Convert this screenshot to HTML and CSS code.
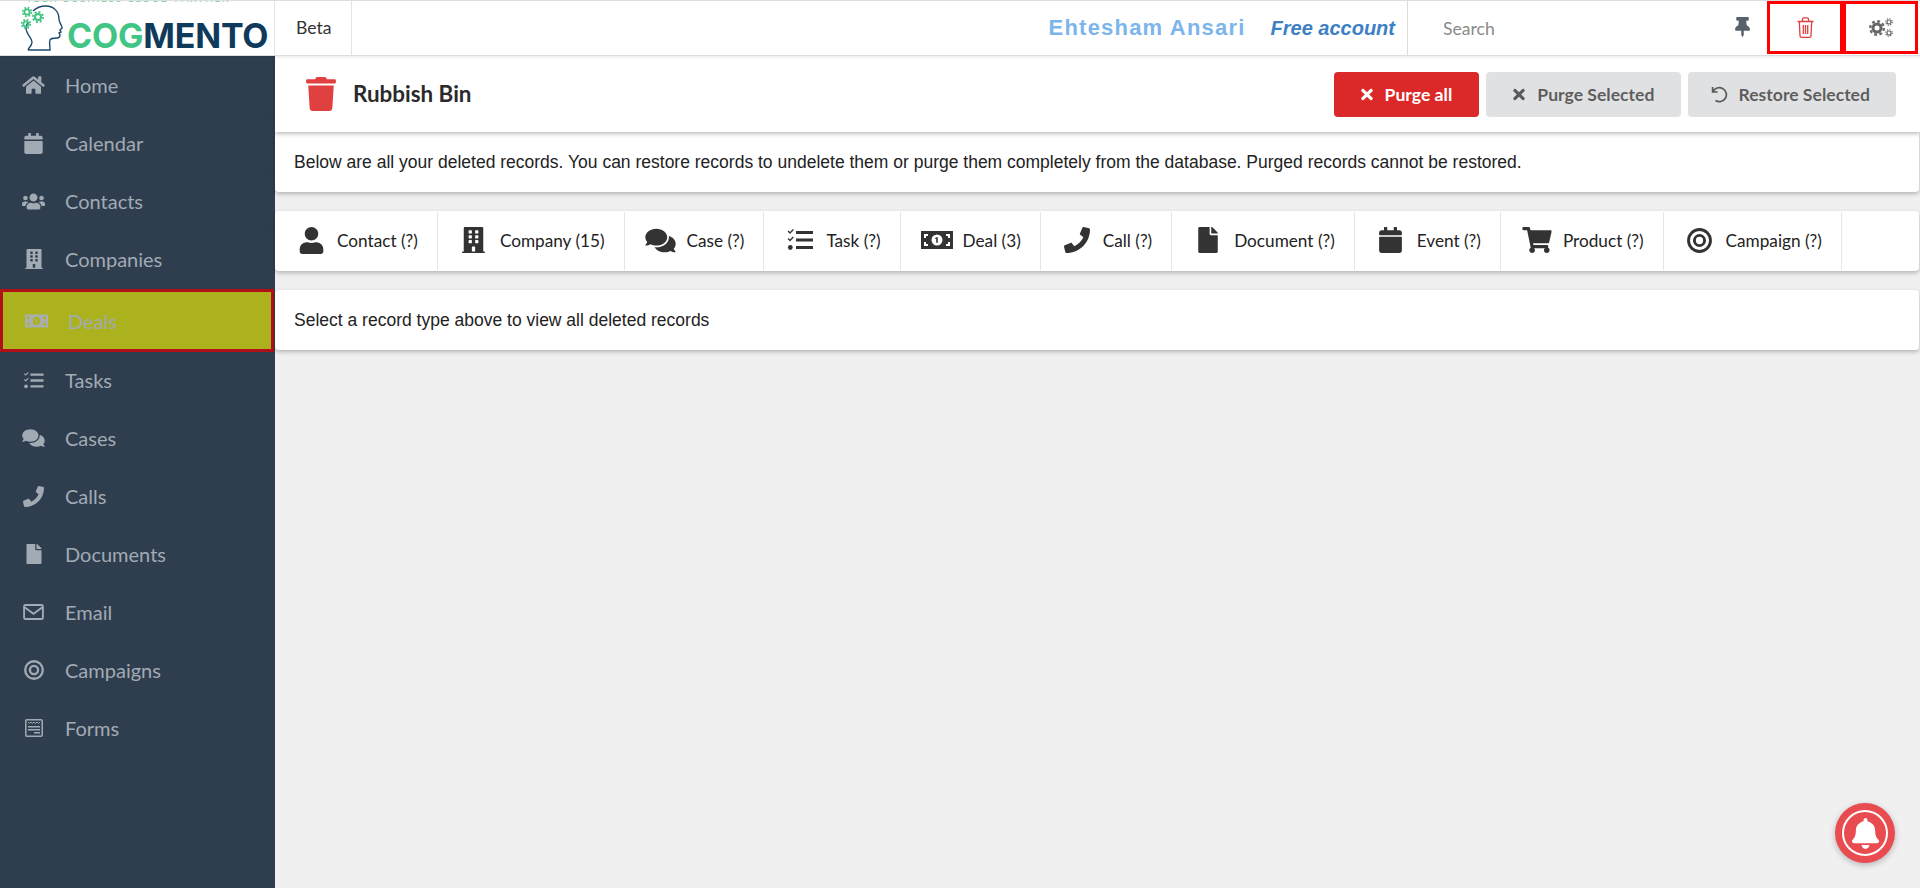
FILE: index.html
```html
<!DOCTYPE html>
<html lang="en">
<head>
    <meta charset="UTF-8">
    <title>Cogmento - Rubbish Bin</title>
    <link rel="stylesheet" href="styles.css">
</head>
<body>
    <svg class="sprite" width="0" height="0">
        <symbol id="i-home" viewBox="0 0 576 512"><path d="M280.37 148.26L96 300.11V464a16 16 0 0 0 16 16l112.06-.29a16 16 0 0 0 15.92-16V368a16 16 0 0 1 16-16h64a16 16 0 0 1 16 16v95.64a16 16 0 0 0 16 16.05L464 480a16 16 0 0 0 16-16V300L295.67 148.26a12.19 12.19 0 0 0-15.3 0zM571.6 251.47L488 182.56V44.05a12 12 0 0 0-12-12h-56a12 12 0 0 0-12 12v72.61L318.47 43a48 48 0 0 0-61 0L4.34 251.47a12 12 0 0 0-1.6 16.9l25.5 31A12 12 0 0 0 45.15 301l235.22-193.74a12.19 12.19 0 0 1 15.3 0L530.9 301a12 12 0 0 0 16.9-1.6l25.5-31a12 12 0 0 0-1.7-16.93z"/></symbol>
        <symbol id="i-calendar" viewBox="0 0 448 512"><path d="M12 192h424c6.6 0 12 5.4 12 12v260c0 26.5-21.5 48-48 48H48c-26.5 0-48-21.5-48-48V204c0-6.6 5.4-12 12-12zm436-44v-36c0-26.5-21.5-48-48-48h-48V12c0-6.6-5.4-12-12-12h-40c-6.6 0-12 5.4-12 12v52H160V12c0-6.6-5.4-12-12-12h-40c-6.6 0-12 5.4-12 12v52H48C21.5 64 0 85.5 0 112v36c0 6.6 5.4 12 12 12h424c6.6 0 12-5.4 12-12z"/></symbol>
        <symbol id="i-users" viewBox="0 0 640 512"><path d="M96 224c35.3 0 64-28.7 64-64s-28.7-64-64-64-64 28.7-64 64 28.7 64 64 64zm448 0c35.3 0 64-28.7 64-64s-28.7-64-64-64-64 28.7-64 64 28.7 64 64 64zm32 32h-64c-17.6 0-33.5 7.1-45.1 18.6 40.3 22.1 68.9 62 75.1 109.4h66c17.7 0 32-14.3 32-32v-32c0-35.3-28.7-64-64-64zm-256 0c61.9 0 112-50.1 112-112S381.9 32 320 32 208 82.1 208 144s50.1 112 112 112zm76.8 32h-8.3c-20.8 10-43.9 16-68.5 16s-47.6-6-68.5-16h-8.3C179.6 288 128 339.6 128 403.2V432c0 26.5 21.5 48 48 48h288c26.5 0 48-21.5 48-48v-28.8c0-63.6-51.6-115.2-115.2-115.2zm-223.7-13.4C161.5 263.1 145.6 256 128 256H64c-35.3 0-64 28.7-64 64v32c0 17.7 14.3 32 32 32h65.9c6.3-47.4 34.9-87.3 75.2-109.4z"/></symbol>
        <symbol id="i-user" viewBox="0 0 448 512"><path d="M224 256c70.7 0 128-57.3 128-128S294.7 0 224 0 96 57.3 96 128s57.3 128 128 128zm89.6 32h-16.7c-22.2 10.2-46.9 16-72.9 16s-50.6-5.8-72.9-16h-16.7C60.2 288 0 348.2 0 422.4V464c0 26.5 21.5 48 48 48h352c26.5 0 48-21.5 48-48v-41.6c0-74.2-60.2-134.4-134.4-134.4z"/></symbol>
        <symbol id="i-building" viewBox="0 0 448 512"><path d="M436 480h-20V24c0-13.255-10.745-24-24-24H56C42.745 0 32 10.745 32 24v456H12c-6.627 0-12 5.373-12 12v20h448v-20c0-6.627-5.373-12-12-12zM128 76c0-6.627 5.373-12 12-12h40c6.627 0 12 5.373 12 12v40c0 6.627-5.373 12-12 12h-40c-6.627 0-12-5.373-12-12V76zm0 96c0-6.627 5.373-12 12-12h40c6.627 0 12 5.373 12 12v40c0 6.627-5.373 12-12 12h-40c-6.627 0-12-5.373-12-12v-40zm52 148h-40c-6.627 0-12-5.373-12-12v-40c0-6.627 5.373-12 12-12h40c6.627 0 12 5.373 12 12v40c0 6.627-5.373 12-12 12zm76 160h-64v-84c0-6.627 5.373-12 12-12h40c6.627 0 12 5.373 12 12v84zm64-172c0 6.627-5.373 12-12 12h-40c-6.627 0-12-5.373-12-12v-40c0-6.627 5.373-12 12-12h40c6.627 0 12 5.373 12 12v40zm0-96c0 6.627-5.373 12-12 12h-40c-6.627 0-12-5.373-12-12v-40c0-6.627 5.373-12 12-12h40c6.627 0 12 5.373 12 12v40zm0-96c0 6.627-5.373 12-12 12h-40c-6.627 0-12-5.373-12-12V76c0-6.627 5.373-12 12-12h40c6.627 0 12 5.373 12 12v40z"/></symbol>
        <symbol id="i-money" viewBox="0 0 32 18"><path fill-rule="evenodd" d="M0 0h32v18H0zM16 3.500a5.500 5.500 0 1 0 0 11 5.500 5.500 0 0 0 0-11zM3 3v4h2V5h2V3zm22 0v2h2v2h2V3zM3 11v4h4v-2H5v-2zm24 0v2h-2v2h4v-4z"/><path d="M15.200 6.200h1.600v5.600h-1.600zM14 7.300l1.400-1.100v1.300l-1.400.6z"/></symbol>
        <symbol id="i-tasks" viewBox="0 0 26 22"><path d="M9 2h17v3H9zM9 9.500h17v3H9zM9 17h17v3H9z"/><path d="M.6 2.500l1-1 1.400 1.400L5.800 0l1 1L3 5zM.6 10l1-1 1.400 1.400L5.800 7.500l1 1L3 12.500z"/><circle cx="3.300" cy="18.500" r="2.400"/></symbol>
        <symbol id="i-comments" viewBox="0 0 576 512"><path d="M416 192c0-88.4-93.1-160-208-160S0 103.600 0 192c0 34.300 14.100 65.900 38 92-13.400 30.200-35.500 54.200-35.800 54.500-2.200 2.300-2.800 5.700-1.500 8.700S4.800 352 8 352c36.600 0 66.900-12.300 88.700-25 32.200 15.700 70.300 25 111.300 25 114.900 0 208-71.600 208-160zm122 220c23.900-26 38-57.700 38-92 0-66.900-53.500-124.200-129.300-148.100.9 6.600 1.300 13.300 1.300 20.100 0 105.900-107.700 192-240 192-10.800 0-21.300-.8-31.700-1.900C207.800 439.600 281.800 480 368 480c41 0 79.100-9.200 111.300-25 21.800 12.700 52.100 25 88.700 25 3.200 0 6.100-1.900 7.300-4.800 1.300-2.900.7-6.300-1.500-8.700-.3-.3-22.400-24.200-35.800-54.500z"/></symbol>
        <symbol id="i-phone" viewBox="0 0 512 512"><path d="M493.400 24.600l-104-24c-11.300-2.600-22.900 3.300-27.500 13.900l-48 112c-4.200 9.800-1.400 21.300 6.900 28l60.600 49.600c-36 76.700-98.900 140.500-177.200 177.200l-49.600-60.600c-6.800-8.300-18.200-11.100-28-6.900l-112 48C3.900 366.500-2 378.100.6 389.400l24 104C27.100 504.200 36.700 512 48 512c256.100 0 464-207.500 464-464 0-11.200-7.700-20.900-18.600-23.400z"/></symbol>
        <symbol id="i-file" viewBox="0 0 384 512"><path d="M224 136V0H24C10.700 0 0 10.700 0 24v464c0 13.300 10.700 24 24 24h336c13.300 0 24-10.700 24-24V160H248c-13.200 0-24-10.800-24-24zm160-14.100v6.100H256V0h6.100c6.400 0 12.500 2.500 17 7l97.900 98c4.500 4.500 7 10.600 7 16.900z"/></symbol>
        <symbol id="i-cart" viewBox="0 0 576 512"><path d="M528.120 301.319l47.273-208C578.806 78.301 567.391 64 551.990 64H159.208l-9.166-44.810C147.758 8.021 137.930 0 126.529 0H24C10.745 0 0 10.745 0 24v16c0 13.255 10.745 24 24 24h69.883l70.248 343.435C147.325 417.100 136 435.222 136 456c0 30.928 25.072 56 56 56s56-25.072 56-56c0-15.674-6.447-29.835-16.824-40h209.647C430.447 426.165 424 440.326 424 456c0 30.928 25.072 56 56 56s56-25.072 56-56c0-22.172-12.888-41.332-31.579-50.405l5.517-24.276c3.413-15.018-8.002-29.319-23.403-29.319H218.117l-6.545-32h293.145c11.206 0 20.920-7.754 23.403-18.681z"/></symbol>
        <symbol id="i-target" viewBox="0 0 26 26"><circle cx="13" cy="13" r="11.400" fill="none" stroke="currentColor" stroke-width="3"/><circle cx="13" cy="13" r="5.300" fill="none" stroke="currentColor" stroke-width="3"/></symbol>
        <symbol id="i-mail" viewBox="0 0 22 17"><rect x="1" y="1" width="20" height="15" rx="1.500" fill="none" stroke="currentColor" stroke-width="2"/><path d="M1.500 3.500L11 10.500l9.500-7" fill="none" stroke="currentColor" stroke-width="2"/></symbol>
        <symbol id="i-form" viewBox="0 0 18 18"><rect x=".8" y=".8" width="16.400" height="16.400" rx="1" fill="none" stroke="currentColor" stroke-width="1.500"/><path d="M3 3l1.500 1.500L6 3l1.500 1.500L9 3l1.500 1.500L12 3l1.500 1.500L15 3" fill="none" stroke="currentColor"/><path d="M3 7h12v1.500H3zM3 10h12v1.500H3zM9 13h6v1.500H9z"/></symbol>
        <symbol id="i-trash" viewBox="0 0 448 512"><path d="M432 32H312l-9.400-18.700A24 24 0 0 0 281.100 0H166.800a23.720 23.720 0 0 0-21.400 13.300L136 32H16A16 16 0 0 0 0 48v32a16 16 0 0 0 16 16h416a16 16 0 0 0 16-16V48a16 16 0 0 0-16-16zM53.200 467a48 48 0 0 0 47.900 45h245.800a48 48 0 0 0 47.900-45L416 128H32z"/></symbol>
        <symbol id="i-times" viewBox="0 0 352 512"><path d="M242.720 256l100.070-100.070c12.280-12.280 12.280-32.190 0-44.480l-22.240-22.240c-12.280-12.280-32.190-12.280-44.480 0L176 189.280 75.930 89.210c-12.280-12.280-32.190-12.280-44.480 0L9.210 111.450c-12.280 12.280-12.280 32.190 0 44.480L109.280 256 9.210 356.070c-12.280 12.280-12.280 32.190 0 44.480l22.240 22.240c12.280 12.280 32.200 12.280 44.480 0L176 322.720l100.070 100.070c12.280 12.280 32.200 12.280 44.480 0l22.240-22.240c12.280-12.280 12.280-32.190 0-44.480L242.720 256z"/></symbol>
        <symbol id="i-pin" viewBox="0 0 384 512"><path d="M298.028 214.267L285.793 96H328c13.255 0 24-10.745 24-24V24c0-13.255-10.745-24-24-24H56C42.745 0 32 10.745 32 24v48c0 13.255 10.745 24 24 24h42.207L85.972 214.267C37.465 236.820 0 277.261 0 328c0 13.255 10.745 24 24 24h136v104.007c0 1.242.289 2.467.845 3.578l24 48c2.941 5.882 11.364 5.893 14.310 0l24-48a8.006 8.006 0 0 0 .845-3.578V352h136c13.255 0 24-10.745 24-24-.001-51.183-37.983-91.420-85.972-113.733z"/></symbol>
        <symbol id="i-bell" viewBox="0 0 448 512"><path d="M224 512c35.320 0 63.970-28.650 63.970-64H160.030c0 35.350 28.650 64 63.970 64zm215.390-149.710c-19.320-20.760-55.470-51.990-55.470-154.290 0-77.700-54.480-139.900-127.940-155.160V32c0-17.670-14.320-32-31.980-32s-31.980 14.330-31.980 32v20.840C118.560 68.100 64.080 130.300 64.080 208c0 102.300-36.150 133.530-55.470 154.290-6 6.450-8.660 14.160-8.610 21.710.11 16.400 12.980 32 32.100 32h383.800c19.120 0 32-15.600 32.100-32 .05-7.550-2.610-15.270-8.610-21.710z"/></symbol>
    </svg>

    <header class="topbar">
        <a class="logo">
            <span class="logo-tag">TECH BUSINESS CLOUD PARTNER</span>
            <svg class="logo-head" width="44" height="46" viewBox="0 0 44 46">
                <path class="line" d="M8 45c1-3 4-4 4-8 0-4-6-8-6-14 0-2 1-4 2-6M13 6c3-3 8-5 13-5 8 0 13 6 13 13 0 2 1 4 3 8 1 2-2 2-2 3l1 2-2 1 1 2c0 2-1 3-3 3-3 0-6 0-7 2-1 2 0 5 0 10H8" stroke="#1e4a6e" stroke-width="1.400"/>
                <g class="line" stroke="#41c584">
                    <circle cx="7" cy="7" r="2.600" stroke-width="1.800"/>
                    <circle cx="7" cy="7" r="4.300" stroke-width="1.800" stroke-dasharray="1.700 1.700"/>
                    <circle cx="18" cy="12" r="3" stroke-width="2"/>
                    <circle cx="18" cy="12" r="5" stroke-width="2" stroke-dasharray="2 1.900"/>
                    <circle cx="6" cy="19" r="2.600" stroke-width="1.800"/>
                    <circle cx="6" cy="19" r="4.300" stroke-width="1.800" stroke-dasharray="1.700 1.700"/>
                </g>
            </svg>
            <span class="logo-text"><span class="logo-cog">COG</span>MENTO</span>
        </a>
        <div class="beta">Beta</div>
        <div class="account">
            <span class="account-name">Ehtesham Ansari</span>
            <span class="account-plan">Free account</span>
        </div>
        <div class="search">
            <span class="search-label">Search</span>
            <svg class="pin" width="15" height="20"><use href="#i-pin"/></svg>
        </div>
        <a class="top-btn top-trash">
            <svg width="17" height="21" viewBox="0 0 17 21">
                <path class="line" stroke="currentColor" stroke-width="1.300" d="M.5 4.500h16M5.500 4.500V2.200c0-.8.500-1.400 1.300-1.400h3.400c.8 0 1.300.6 1.300 1.400v2.300M2.300 4.500l.7 14.200c0 .9.700 1.600 1.600 1.600h7.800c.9 0 1.600-.7 1.600-1.600l.7-14.200M6.300 8v9M8.500 8v9M10.700 8v9"/>
            </svg>
        </a>
        <a class="top-btn top-cogs">
            <svg width="24" height="19" viewBox="0 0 24 19">
                <g class="line" stroke="currentColor">
                    <circle cx="8" cy="10" r="4" stroke-width="3"/>
                    <circle cx="8" cy="10" r="6.800" stroke-width="2.400" stroke-dasharray="2.800 2.540"/>
                    <circle cx="20" cy="4" r="2" stroke-width="1.200"/>
                    <circle cx="20" cy="4" r="3.300" stroke-width="1.100" stroke-dasharray="1.300 1.290"/>
                    <circle cx="20" cy="15" r="2" stroke-width="1.200"/>
                    <circle cx="20" cy="15" r="3.300" stroke-width="1.100" stroke-dasharray="1.300 1.290"/>
                </g>
            </svg>
        </a>
    </header>

    <div class="layout">
        <nav class="sidebar">
            <a class="nav-item"><span class="nav-ico"><svg width="23" height="20"><use href="#i-home"/></svg></span>Home</a>
            <a class="nav-item"><span class="nav-ico"><svg width="19" height="21"><use href="#i-calendar"/></svg></span>Calendar</a>
            <a class="nav-item"><span class="nav-ico"><svg width="26" height="21"><use href="#i-users"/></svg></span>Contacts</a>
            <a class="nav-item"><span class="nav-ico"><svg width="18" height="20"><use href="#i-building"/></svg></span>Companies</a>
            <a class="nav-item nav-active"><span class="nav-ico"><svg width="26" height="14"><use href="#i-money"/></svg></span>Deals</a>
            <a class="nav-item"><span class="nav-ico"><svg width="21" height="17"><use href="#i-tasks"/></svg></span>Tasks</a>
            <a class="nav-item"><span class="nav-ico"><svg width="23" height="20"><use href="#i-comments"/></svg></span>Cases</a>
            <a class="nav-item"><span class="nav-ico"><svg width="21" height="21"><use href="#i-phone"/></svg></span>Calls</a>
            <a class="nav-item"><span class="nav-ico"><svg width="16" height="20"><use href="#i-file"/></svg></span>Documents</a>
            <a class="nav-item"><span class="nav-ico"><svg width="21" height="16"><use href="#i-mail"/></svg></span>Email</a>
            <a class="nav-item"><span class="nav-ico"><svg width="20" height="20"><use href="#i-target"/></svg></span>Campaigns</a>
            <a class="nav-item"><span class="nav-ico"><svg width="18" height="18"><use href="#i-form"/></svg></span>Forms</a>
        </nav>

        <main class="content">
            <div class="page-head">
                <svg class="page-ico" width="30" height="34"><use href="#i-trash"/></svg>
                <h1 class="page-title">Rubbish Bin</h1>
                <div class="actions">
                    <button class="btn btn-red"><svg width="12" height="17"><use href="#i-times"/></svg>Purge all</button>
                    <button class="btn"><svg width="12" height="17"><use href="#i-times"/></svg>Purge Selected</button>
                    <button class="btn btn-restore">
                        <svg width="17" height="17" viewBox="0 0 17 17"><path class="line" stroke="currentColor" stroke-width="1.700" d="M1.600 1v5h5M2 5.800A7 7 0 1 1 4.500 14.500"/></svg>
                        Restore Selected
                    </button>
                </div>
            </div>

            <div class="card card-info">Below are all your deleted records. You can restore records to undelete them or purge them completely from the database. Purged records cannot be restored.</div>

            <div class="card tabs">
                <a class="tab"><span class="tab-ico"><svg width="27" height="27"><use href="#i-user"/></svg></span>Contact (?)</a>
                <a class="tab"><span class="tab-ico"><svg width="23" height="26"><use href="#i-building"/></svg></span>Company (15)</a>
                <a class="tab"><span class="tab-ico"><svg width="31" height="27"><use href="#i-comments"/></svg></span>Case (?)</a>
                <a class="tab"><span class="tab-ico"><svg width="26" height="22"><use href="#i-tasks"/></svg></span>Task (?)</a>
                <a class="tab"><span class="tab-ico"><svg width="32" height="18"><use href="#i-money"/></svg></span>Deal (3)</a>
                <a class="tab"><span class="tab-ico"><svg width="26" height="26"><use href="#i-phone"/></svg></span>Call (?)</a>
                <a class="tab"><span class="tab-ico"><svg width="20" height="26"><use href="#i-file"/></svg></span>Document (?)</a>
                <a class="tab"><span class="tab-ico"><svg width="23" height="26"><use href="#i-calendar"/></svg></span>Event (?)</a>
                <a class="tab"><span class="tab-ico"><svg width="30" height="26"><use href="#i-cart"/></svg></span>Product (?)</a>
                <a class="tab"><span class="tab-ico"><svg width="25" height="25"><use href="#i-target"/></svg></span>Campaign (?)</a>
            </div>

            <div class="card card-hint">Select a record type above to view all deleted records</div>
        </main>
    </div>

    <a class="bell"><span class="bell-ring"><svg width="27" height="31"><use href="#i-bell"/></svg></span></a>
</body>
</html>
```

FILE: styles.css
```css
* {
    box-sizing: border-box;
}

html, body {
    height: 100%;
}

body {
    margin: 0;
    font-family: 'Lato', sans-serif;
    background-color: #f0f0f0;
    color: #222;
    overflow: hidden;
}

svg {
    fill: currentColor;
    display: block;
}

svg .line {
    fill: none;
}

.sprite {
    position: absolute;
}

/* top bar */
.topbar {
    height: 56px;
    display: flex;
    background: white;
    border-top: 1px solid #ddd;
    border-bottom: 1px solid #ddd;
    box-shadow: 0 1px 3px rgba(0,0,0,0.1);
    position: relative;
    z-index: 3;
    overflow: hidden;
}

.logo {
    width: 275px;
    flex: none;
    display: flex;
    align-items: flex-start;
    border-right: 1px solid #e4e4e4;
    position: relative;
    padding: 4px 0 0 20px;
}

.logo-tag {
    position: absolute;
    top: -9px;
    left: 26px;
    font-size: 10px;
    letter-spacing: 1.7px;
    white-space: nowrap;
    color: #6fd19e;
}

.logo-head {
    flex: none;
}

.logo-text {
    font-family: 'Inter', sans-serif;
    font-weight: 700;
    font-size: 34px;
    line-height: 40px;
    margin: 11px 0 0 3px;
    letter-spacing: -0.2px;
    color: #0f3a5c;
}

.logo-cog {
    color: #41c584;
}

.beta {
    width: 77px;
    flex: none;
    padding-left: 21px;
    line-height: 54px;
    font-size: 17.6px;
    color: #333;
    border-right: 1px solid #e4e4e4;
}

.account {
    flex: 1;
    display: flex;
    justify-content: flex-end;
    align-items: center;
    gap: 25px;
    padding: 0 12px 0 0;
    font-family: 'Liberation Sans', sans-serif;
    font-weight: bold;
}

.account-name {
    font-size: 22px;
    letter-spacing: 1.2px;
    color: #7cb5ec;
}

.account-plan {
    font-size: 20px;
    font-style: italic;
    color: #3d80c4;
}

.search {
    width: 360px;
    flex: none;
    display: flex;
    justify-content: space-between;
    align-items: center;
    padding: 0 17px 0 35px;
    border-left: 1px solid #ddd;
    font-size: 17.6px;
    color: #8a8a8a;
}

.pin {
    color: #56616c;
    margin-bottom: 2px;
}

.top-btn {
    width: 76px;
    height: 53px;
    flex: none;
    display: flex;
    justify-content: center;
    align-items: center;
    border: 3px solid #f00;
}

.top-trash {
    color: #e04040;
}

.top-cogs {
    color: #666;
    width: 75px;
    margin-right: 2px;
}

/* layout */
.layout {
    display: flex;
    height: 832px;
}

.sidebar {
    width: 275px;
    flex: none;
    background-color: #2e3e4f;
    padding-top: 1px;
    color: #a2aab3;
}

.nav-item {
    height: 58px;
    display: flex;
    align-items: center;
    padding-bottom: 1px;
    font-size: 20px;
    border-bottom: 1px solid rgba(0,0,0,0.03);
}

.nav-ico {
    width: 65px;
    flex: none;
    padding: 0 20px 0 22px;
    display: flex;
    justify-content: center;
}

.nav-active {
    height: 63px;
    padding-bottom: 0;
    background-color: #abb21e;
    border: 3px solid #b01116;
    width: 274px;
}

.nav-active .nav-ico {
    color: #a9afb0;
}

.content {
    flex: 1;
    min-width: 0;
}

.page-head {
    height: 76px;
    display: flex;
    align-items: center;
    padding: 0 24px 0 31px;
    background: white;
    box-shadow: 0 2px 4px rgba(0,0,0,0.25);
    position: relative;
    z-index: 1;
}

.page-ico {
    color: #e04040;
    margin-right: 17px;
}

.page-title {
    margin: 0 0 2px;
    font-size: 22.4px;
    font-weight: bold;
    color: #2a2a2a;
}

.actions {
    margin-left: auto;
    display: flex;
    gap: 7px;
}

.btn {
    height: 45px;
    display: flex;
    align-items: center;
    gap: 12px;
    padding: 0 27px;
    border: none;
    border-radius: 4px;
    background-color: #e0e1e2;
    color: rgba(0,0,0,0.6);
    font-family: 'Lato', sans-serif;
    font-weight: bold;
    font-size: 17.6px;
}

.btn-red {
    background-color: #db2828;
    color: white;
}

.btn-restore {
    gap: 10px;
    padding: 0 26px 0 23px;
}

.card {
    margin: 0 1px 19px 0;
    background: white;
    border-radius: 0 0 4px 4px;
    box-shadow: 0 2px 4px rgba(0,0,0,0.25);
}

.card-info {
    height: 60px;
    padding: 0 19px;
    display: flex;
    align-items: center;
    font-family: 'Liberation Sans', sans-serif;
    font-size: 17.5px;
    color: #222;
}

.tabs {
    height: 60px;
    display: flex;
    border-radius: 4px;
    padding: 1px 0;
}

.tab {
    display: flex;
    align-items: center;
    padding: 0 19px 2px 20px;
    font-size: 17.2px;
    white-space: nowrap;
    color: #222;
    border-right: 1px solid #e6e6e6;
}

.tab-ico {
    width: 32px;
    margin-right: 10px;
    display: flex;
    justify-content: center;
    color: #333;
}

.card-hint {
    height: 60px;
    padding: 0 19px;
    display: flex;
    align-items: center;
    font-family: 'Liberation Sans', sans-serif;
    font-size: 17.5px;
    border-radius: 4px;
    color: #222;
}

.bell {
    position: fixed;
    left: 1835px;
    top: 803px;
    width: 60px;
    height: 60px;
    border-radius: 50%;
    background-color: #e84c50;
    display: flex;
    justify-content: center;
    align-items: center;
    box-shadow: 0 2px 6px rgba(0,0,0,0.25);
}

.bell-ring {
    width: 46px;
    height: 46px;
    border: 2px solid white;
    border-radius: 50%;
    display: flex;
    justify-content: center;
    align-items: center;
    color: white;
}
```
